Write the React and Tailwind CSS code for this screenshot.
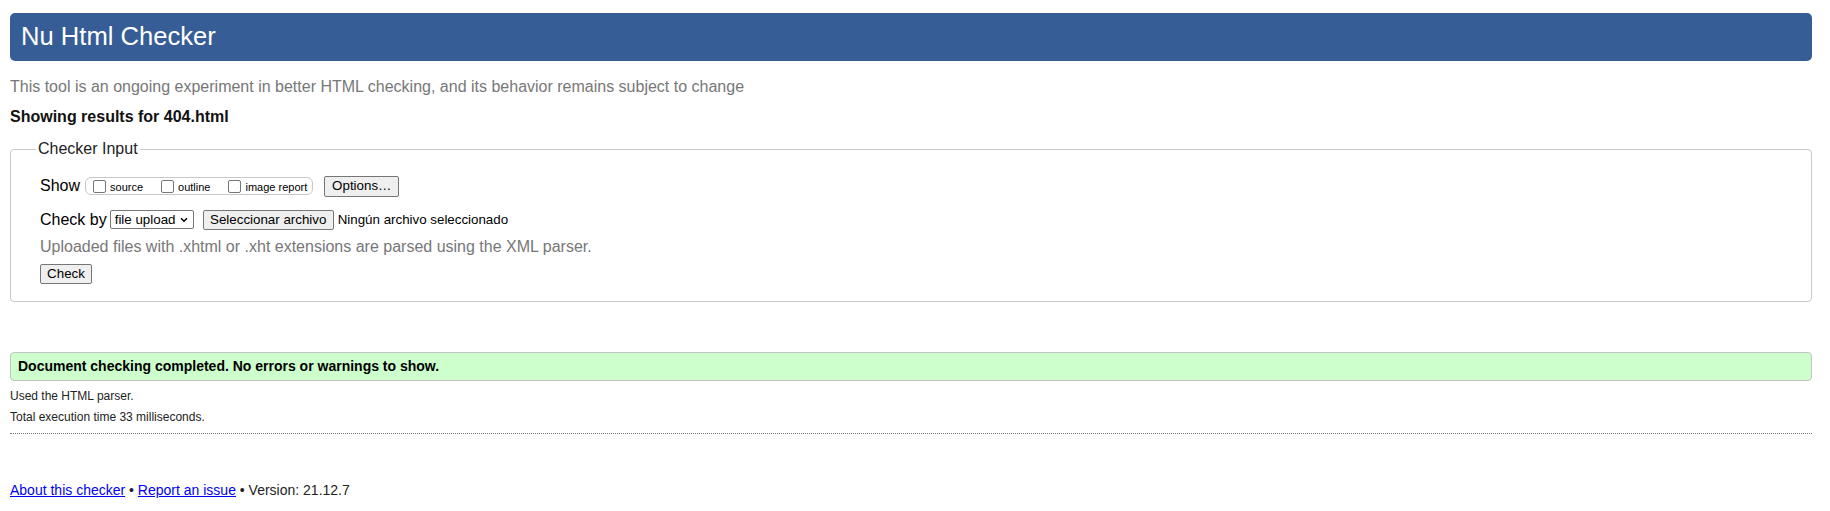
import React from 'react';

const font = { fontFamily: '"Liberation Sans", Arial, sans-serif' };

const Checkbox = ({ label }) => (
  <span className="flex items-center">
    <span className="w-[13px] h-[13px] border border-[#767676] rounded-[2px] bg-white mr-[4px]" />
    <span className="text-[11px] leading-[13px] mt-[3px]">{label}</span>
  </span>
);

const NativeButton = ({ children, className = '' }) => (
  <button
    type="button"
    className={`flex items-center justify-center bg-[#efefef] border border-[#767676] rounded-[2px] text-[13.33px] text-black ${className}`}
  >
    {children}
  </button>
);

const CheckerInput = () => (
  <fieldset className="mt-[14px] border border-[#c8c8c8] rounded-[4px] pl-[25px] pb-[17px]">
    <legend className="px-[2px] text-[16px] leading-[18px] text-[#222]">Checker Input</legend>
    <div className="pl-[4px]">
      {/* show row */}
      <div className="mt-[17px] h-[22px] flex items-center">
        <span className="text-[16px] leading-[18px]">Show</span>
        <div className="ml-[5px] h-[18px] border border-[#c8c8c8] rounded-[6px] flex items-center pl-[7px] pr-[5px] gap-[18px]">
          <Checkbox label="source" />
          <Checkbox label="outline" />
          <Checkbox label="image report" />
        </div>
        <NativeButton className="ml-[11px] w-[75px] h-[21px]">Options…</NativeButton>
      </div>

      {/* check by row */}
      <div className="mt-[12px] h-[21px] flex items-center">
        <span className="text-[16px] leading-[18px]">Check by</span>
        <div className="ml-[3px] w-[84px] h-[19px] border border-[#767676] rounded-[2px] bg-white flex items-center justify-between pl-[4px] pr-[5px] text-[13.33px]">
          <span>file upload</span>
          <svg width="8" height="6" viewBox="0 0 8 6" fill="none">
            <path d="M1 1.2 L4 4.2 L7 1.2" stroke="#000" strokeWidth="1.6" />
          </svg>
        </div>
        <NativeButton className="ml-[9px] w-[131px] h-[20px]">Seleccionar archivo</NativeButton>
        <span className="ml-[4px] text-[13.33px]">Ningún archivo seleccionado</span>
      </div>

      <p className="mt-[8px] text-[16px] leading-[18px] text-[#777]">
        Uploaded files with .xhtml or .xht extensions are parsed using the XML parser.
      </p>

      <NativeButton className="mt-[8px] w-[52px] h-[20px]">Check</NativeButton>
    </div>
  </fieldset>
);

export default function App() {
  return (
    <div className="min-h-screen bg-white text-black" style={font}>
      <div className="ml-[10px] w-[1802px] pt-[13px] pb-[10px]">
        <header className="h-[48px] bg-[#365d95] rounded-[5px] flex items-center pl-[11px]">
          <h1 className="text-[25.6px] text-white leading-none">Nu Html Checker</h1>
        </header>

        <p className="mt-[17px] text-[16px] leading-[18px] text-[#777]">
          This tool is an ongoing experiment in better HTML checking, and its behavior remains subject to change
        </p>
        <p className="mt-[12px] text-[16px] leading-[18px] font-bold text-[#111]">Showing results for 404.html</p>

        <CheckerInput />

        <div className="mt-[50px] h-[29px] bg-[#ccffcc] border border-[#c4c4c4] rounded-[4px] flex items-center pl-[7px]">
          <p className="text-[14px] font-bold">Document checking completed. No errors or warnings to show.</p>
        </div>

        <p className="mt-[8px] text-[12px] leading-[14px] text-[#222]">Used the HTML parser.</p>
        <p className="mt-[7px] text-[12px] leading-[14px] text-[#222]">Total execution time 33 milliseconds.</p>

        <div className="mt-[9px] border-t border-dotted border-[#777]" />

        <p className="mt-[48px] text-[14px] leading-[16px] text-[#222]">
          <a href="#" className="text-[#0000ee] underline">About this checker</a>
          {' • '}
          <a href="#" className="text-[#0000ee] underline">Report an issue</a>
          {' • Version: 21.12.7'}
        </p>
      </div>
    </div>
  );
}
